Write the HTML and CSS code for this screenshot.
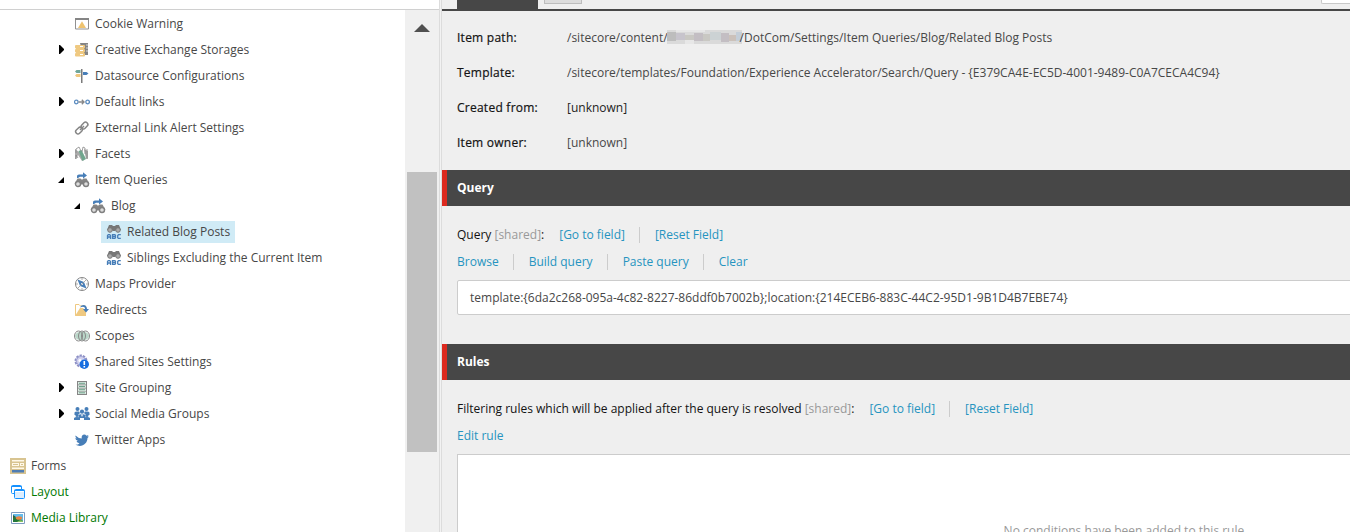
FILE: index.html
```html
<!DOCTYPE html>
<html lang="en">
<head>
<meta charset="utf-8">
<title>Content Editor</title>
<link rel="stylesheet" href="styles.css">
</head>
<body>
<div class="app">
  <aside class="sidebar">
    <div class="sidebar-top"></div>
    <div class="sidebar-body">
      <nav class="tree">
        <div class="row l1"><i class="arrow"></i><span class="node"><svg viewBox="0 0 16 16"><path d="M1.500 2.500h13v10.500h-13z" fill="#fff" stroke="#919191"/><path d="M1 2h14v2H1z" fill="#858585"/><path d="M8 5.200l4 6.800H4z" fill="#efc36f"/></svg>Cookie Warning</span></div>
        <div class="row l1"><i class="arrow closed"></i><span class="node"><svg viewBox="0 0 16 16"><path d="M6 1h8v12H9z" fill="#858585"/><path d="M12 3h2M12 6h2M12 9h2" stroke="#fff" stroke-width=".7"/><rect x="1" y="3" width="10" height="3.400" rx="1" fill="#efc981"/><rect x="1" y="7" width="10" height="3.400" rx="1" fill="#efc981"/><rect x="1" y="11" width="10" height="3.500" rx="1" fill="#efc981"/><path d="M2 6.500h8M2 10.500h8" stroke="#efc981"/><path d="M6 4.500h3M6 8.500h3M6 12.500h3" stroke="#fff"/></svg>Creative Exchange Storages</span></div>
        <div class="row l1"><i class="arrow"></i><span class="node"><svg viewBox="0 0 16 16"><path d="M7 1h1.500v14H7z" fill="#7b7b7b"/><path d="M6.500 2v3H2.500L1 3.500 2.500 2z" fill="#70a69a"/><path d="M9 4h3.500L14.500 5.500 12.500 7H9z" fill="#477eb8"/><path d="M6.500 6v3H2.500L1 7.500 2.500 6z" fill="#efc77d"/></svg>Datasource Configurations</span></div>
        <div class="row l1"><i class="arrow closed"></i><span class="node"><svg viewBox="0 0 16 16"><g fill="none" stroke-width="1.300"><circle cx="2.300" cy="8" r="1.800" stroke="#5b8cc0"/><circle cx="13.600" cy="8" r="1.800" stroke="#5b8cc0"/><path d="M4.500 8h6M7.800 5.800L10 8l-2.200 2.200" stroke="#888"/></g></svg>Default links</span></div>
        <div class="row l1"><i class="arrow"></i><span class="node"><svg viewBox="0 0 16 16"><g fill="none" stroke="#858585" stroke-width="1.500"><rect x="6.800" y="3.200" width="7.400" height="4.600" rx="2.200" transform="rotate(-45 10.500 5.500)"/><rect x="1.300" y="8.300" width="7.400" height="4.600" rx="2.200" transform="rotate(-45 5 10.600)"/><path d="M6 10l4-4"/></g></svg>External Link Alert Settings</span></div>
        <div class="row l1"><i class="arrow closed"></i><span class="node"><svg viewBox="0 0 16 16"><path d="M1 3l4 3 5 8-2 1-4-6-2 4H1zM10 3l4 2v8h-2z" fill="#aaa"/><path d="M4.500 5l3-1 4.500 9-3.500 2z" fill="#70a68e"/><path d="M2 7V3L5 1l2 4M8 6l1-5 2 1v6M13 3v9M2 13V9l2 3" fill="none" stroke="#888" stroke-width=".8"/></svg>Facets</span></div>
        <div class="row l1"><i class="arrow open"></i><span class="node"><svg viewBox="0 0 16 16"><use href="#query"/></svg>Item Queries</span></div>
        <div class="row l2"><i class="arrow open"></i><span class="node"><svg viewBox="0 0 16 16"><use href="#query"/></svg>Blog</span></div>
        <div class="row l3"><i class="arrow"></i><span class="node selected"><svg viewBox="0 0 16 16"><use href="#abc"/></svg>Related Blog Posts</span></div>
        <div class="row l3"><i class="arrow"></i><span class="node"><svg viewBox="0 0 16 16"><use href="#abc"/></svg>Siblings Excluding the Current Item</span></div>
        <div class="row l1"><i class="arrow"></i><span class="node"><svg viewBox="0 0 16 16"><circle cx="8" cy="8" r="6.500" fill="#fff" stroke="#858585"/><path d="M8 2v2M8 12v2M2 8h2M12 8h2" stroke="#aaa"/><path d="M3.500 3.500L10 6 12.500 12.500 6 10z" fill="#477eb8"/><circle cx="8" cy="8" r="1" fill="#fff"/><path d="M12 4L4 12" stroke="#999" stroke-width=".8"/></svg>Maps Provider</span></div>
        <div class="row l1"><i class="arrow"></i><span class="node"><svg viewBox="0 0 16 16"><path d="M1.500 13.500v-11H5L6.500 4h5v9.500z" fill="#fff" stroke="#efc981"/><path d="M1 14L6 6h3l3 3v5z" fill="#efc981"/><path d="M6 5.500C8 1.300 13 2.800 13 7H15l-3 3.500L9 7h2C11 4.500 9 4 6 5.500z" fill="#477eb8"/></svg>Redirects</span></div>
        <div class="row l1"><i class="arrow"></i><span class="node"><svg viewBox="0 0 16 16"><ellipse cx="8" cy="8" rx="7" ry="4.500" fill="#b9d6c8"/><g fill="none" stroke="#888"><ellipse cx="4.500" cy="8" rx="4" ry="5"/><ellipse cx="8" cy="8" rx="3.500" ry="5"/><ellipse cx="11.500" cy="8" rx="4" ry="5"/></g></svg>Scopes</span></div>
        <div class="row l1"><i class="arrow"></i><span class="node"><svg viewBox="0 0 16 16"><circle cx="7" cy="7" r="5.500" fill="#d8d8f2" stroke="#8b8ec4" stroke-width="2" stroke-dasharray="2.300 1.100"/><circle cx="7" cy="7" r="4.500" fill="#d2d3ef" stroke="#a4a6d4"/><circle cx="6" cy="6.500" r="1.500" fill="#fff"/><circle cx="10.300" cy="10.300" r="4.700" fill="#176ee0"/><path d="M10.300 7v4M10.300 12v1.500" stroke="#fff" stroke-width="1.600"/></svg>Shared Sites Settings</span></div>
        <div class="row l1"><i class="arrow closed"></i><span class="node"><svg viewBox="0 0 16 16"><path d="M3 1h10v14H3z" fill="#858585"/><path d="M4 2h8v2.500H4zM4 5.200h8v2.500H4zM4 8.400h8v2.500H4zM4 11.600h8V14H4z" fill="#d9e9e1"/><path d="M5 3.300h6M5 6.500h6M5 9.700h6M5 12.800h6" stroke="#70a08b"/></svg>Site Grouping</span></div>
        <div class="row l1"><i class="arrow closed"></i><span class="node"><svg viewBox="0 0 16 16"><g fill="#477eb8"><circle cx="3.500" cy="3" r="2"/><circle cx="12.500" cy="3" r="2"/><path d="M.5 9V6.500Q1 5.500 3 5.500h2L6 7 4 9zM15.500 9V6.500Q15 5.500 13 5.500h-2L10 7l2 2z"/><circle cx="8" cy="5.700" r="2.100"/><circle cx="3" cy="9.500" r="1.500"/><circle cx="13" cy="9.500" r="1.500"/><path d="M4.500 12V9.500Q5 8.200 7 8.200h2q2 0 2.500 1.300V12z"/><path d="M0 14v-2q1-1 3-1 2 0 3 1v2zM10 14v-2q1-1 3-1 2 0 3 1v2z"/></g><path d="M7 8.500L8 11l1-2.500" fill="#fff"/></svg>Social Media Groups</span></div>
        <div class="row l1"><i class="arrow"></i><span class="node"><svg viewBox="0 0 16 16"><path d="M1.500 3.500Q4.500 6.500 7.700 6.500C7 3 10.500 1.300 12.500 3.700L14.500 3l-1 1.700 1.500-.3-1.500 1.700C13.500 12 7.500 16 1.500 12.800q3 0 4-1.500Q3 11 2.500 9H4Q1.300 8 1.300 6l1.500.5Q.8 5 1.500 3.500z" fill="#477eb8"/></svg>Twitter Apps</span></div>
        <div class="row l0"><span class="node"><svg viewBox="0 0 16 16"><path d="M0 0h16v16H0z" fill="#d8c491"/><path d="M2 2h12v1.500H2zM2 5h7v3H2zM10 5h4v3h-4zM2 9.500h12V11H2z" fill="#fff8e8"/><path d="M3 6.500h5M11 6.500h2" stroke="#d8c491"/><path d="M2 12h12v2.500H2z" fill="#4f7db3"/></svg>Forms</span></div>
        <div class="row l0 green"><span class="node"><svg viewBox="0 0 16 16"><g fill="#fff" stroke="#1692ff"><rect x="1.500" y="1.500" width="10" height="8" rx="1"/><path d="M1.500 2.500h10"/><rect x="4.500" y="5.500" width="10" height="9" rx="1"/><path d="M4.500 6.500h10"/></g><path d="M5 8h9v6H5z" fill="#dceeff"/></svg>Layout</span></div>
        <div class="row l0 green"><span class="node"><svg viewBox="0 0 16 16"><path d="M1.500 2.500h13v11h-13z" fill="#fff" stroke="#7f9cc0"/><path d="M3 4h10v8H3z" fill="#65bceb"/><path d="M3 7q5 0 10 4v1H3z" fill="#247839"/><path d="M7 12q3-3 6-1v1z" fill="#8bc466"/><ellipse cx="9" cy="8" rx="3.200" ry="1.800" fill="#e98545"/><path d="M3 5l3 2-3 1z" fill="#365d30"/></svg>Media Library</span></div>
      </nav>
      <div class="scrollbar"><div class="scroll-up"></div><div class="thumb"></div></div>
    </div>
  </aside>
  <div class="splitter"></div>
  <main class="editor">
    <header class="tabs"><div class="tab-active"></div><div class="tab-button"></div><div class="search-box"></div></header>
    <dl class="info">
      <dt>Item path:</dt><dd>/sitecore/content/<svg class="redacted" viewBox="0 0 75 14"><path d="M0 0h75v14H0z" fill="#dadada"/><path d="M0 2h9v9H0z" fill="#bdbdbd"/><path d="M9 3h9v7H9z" fill="#c7c4cc"/><path d="M18 5h9v5h-9zM36 4h7v7h-7z" fill="#c9c8c3"/><path d="M27 3h9v8h-9zM54 3h8v9h-8z" fill="#c3bec3"/><path d="M43 2h11v8H43z" fill="#ccd2d4"/><path d="M62 5h7v6h-7z" fill="#cbc1ba"/><path d="M69 2h6v9h-6z" fill="#c4ced8"/><path d="M9 0h29v2H9zM18 10h9v4h-9z" fill="#e7e7e7"/></svg>/DotCom/Settings/Item Queries/Blog/Related Blog Posts</dd>
      <dt>Template:</dt><dd>/sitecore/templates/Foundation/Experience Accelerator/Search/Query - {E379CA4E-EC5D-4001-9489-C0A7CECA4C94}</dd>
      <dt>Created from:</dt><dd class="dark">[unknown]</dd>
      <dt>Item owner:</dt><dd>[unknown]</dd>
    </dl>
    <h2 class="section">Query</h2>
    <section class="field">
      <div class="links title"><span>Query <em>[shared]</em>:</span><a>[Go to field]</a><a>[Reset Field]</a></div>
      <div class="links"><a>Browse</a><a>Build query</a><a>Paste query</a><a>Clear</a></div>
      <div class="input"><span>template:{6da2c268-095a-4c82-8227-86ddf0b7002b};location:{214ECEB6-883C-44C2-95D1-9B1D4B7EBE74}</span></div>
    </section>
    <h2 class="section">Rules</h2>
    <section class="field">
      <div class="links title"><span>Filtering rules which will be applied after the query is resolved <em>[shared]</em>:</span><a>[Go to field]</a><a>[Reset Field]</a></div>
      <div class="links"><a>Edit rule</a></div>
      <div class="rules-box">No conditions have been added to this rule.</div>
    </section>
  </main>
</div>
<svg class="defs">
  <symbol id="query" viewBox="0 0 16 16"><path d="M3 6V4q0-1.500 2-1.500h4V.3L13 3.500 9 6.500V4.800H6L4 6z" fill="#477eb8"/><path d="M3.500 6.500h3l1 1h1l1-1h3L15.500 12H.5z" fill="#858585"/><g fill="#ddd" stroke="#808080" stroke-width="1.400"><circle cx="4" cy="12" r="2.500"/><circle cx="12" cy="12" r="2.500"/></g><path d="M6.500 9.500h3v3h-3z" fill="#808080"/></symbol>
  <symbol id="abc" viewBox="0 0 16 16"><path d="M3 1h3l1 1h2l1-1h3l2 5H1z" fill="#777"/><circle cx="4" cy="6" r="2.300" fill="#aaa" stroke="#777"/><circle cx="12" cy="6" r="2.300" fill="#aaa" stroke="#777"/><path d="M6.500 3h3v4h-3z" fill="#777"/><path d="M1.500 15v-3.500l.8-.8h1.400l.8.800V15M1.500 13h3M6.500 10.600v3.800h2.300l.7-.6v-.8l-.5-.5.5-.5v-.8l-.7-.6zM6.500 12.500h2.500M14.800 10.700H12.500l-.8.800V13.700l.8.700h2.300" fill="none" stroke="#477eb8" stroke-width="1.300"/></symbol>
</svg>
</body>
</html>
```
FILE: styles.css
```css
* { box-sizing: border-box; }
body { margin: 0; background: #efefef; font-family: "Open Sans", sans-serif; font-size: 12px; line-height: 16px; color: #474747; overflow: hidden; }
.app { display: flex; height: 532px; overflow: hidden; }
.sidebar { width: 439px; flex: none; display: flex; flex-direction: column; background: #fff; }
.sidebar-top { height: 10px; flex: none; border-bottom: 1px solid #d0d0d0; }
.sidebar-body { display: flex; flex: 1; min-height: 0; }
.tree { width: 405px; padding-top: 1px; }
.row { display: flex; align-items: center; height: 26px; }
.l0 { padding-left: 5px; }
.l1 { padding-left: 56px; }
.l2 { padding-left: 72px; }
.l3 { padding-left: 88px; }
.arrow { width: 13px; height: 10px; flex: none; padding-left: 3px; }
.arrow::before { content: ""; display: block; }
.closed::before { width: 5px; height: 9px; background: #000; clip-path: polygon(0 0, 20% 0, 100% 45%, 100% 55%, 20% 100%, 0 100%); }
.open::before { width: 6px; height: 6px; margin: 2px 0 0 -1px; background: #000; clip-path: polygon(100% 0, 100% 100%, 0 100%); }
.node { display: flex; align-items: center; height: 22px; padding: 0 5px; white-space: nowrap; }
.node svg { width: 16px; height: 16px; margin-right: 5px; flex: none; }
.selected { background: #d0ebf6; }
.green { color: #007800; }
.scrollbar { width: 34px; padding: 14px 2px 0; background: #f0f0f0; }
.scroll-up { width: 16px; height: 8px; margin: 0 auto 140px; background: #505050; clip-path: polygon(50% 0, 100% 100%, 0 100%); }
.thumb { height: 280px; background: #c1c1c1; }
.splitter { width: 3px; flex: none; background: #f2f2f2; border: solid #dcdcdc; border-width: 0 1px; }
.editor { flex: 1; min-width: 0; }
.tabs { display: flex; align-items: flex-start; height: 11px; border-bottom: 2px solid #474747; padding-left: 15px; }
.tab-active { width: 81px; height: 9px; background: #474747; }
.tab-button { width: 38px; height: 4px; margin-left: 6px; background: #ddd; border: 1px solid #bdbdbd; border-top: 0; }
.search-box { width: 29px; height: 4px; margin-left: auto; background: #fff; border: solid #c9c9c9; border-width: 0 0 1px 1px; border-radius: 0 0 0 2px; }
.info { display: grid; grid-template-columns: 110px 1fr; grid-auto-rows: 35px; height: 159px; margin: 0; padding: 9px 0 0 15px; align-items: center; white-space: nowrap; }
dt { color: #131313; letter-spacing: .25px; -webkit-text-stroke: .2px #131313; }
dd { margin: 0; }
.dark { color: #222; }
.redacted { width: 75px; height: 14px; margin: 0 -2px 0 -1px; vertical-align: -2px; }
.section { height: 36px; margin: 0; padding-left: 10px; border-left: 5px solid #dc291e; background: #474747; color: #fff; font-size: 12px; line-height: 36px; font-weight: 700; }
.field { padding: 15px 0 0 15px; height: 138px; }
.links { display: flex; align-items: center; height: 27px; color: #2694c0; white-space: nowrap; }
.links a + a { margin-left: 14px; padding-left: 15px; border-left: 1px solid #ccc; }
.title > span { color: #131313; margin-right: 15px; }
em { font-style: normal; color: #999; }
.input { width: 920px; height: 35px; margin-top: 5px; padding: 0 12px; border: 1px solid #ccc; border-radius: 2px; background: #fff; line-height: 33px; white-space: nowrap; }
.rules-box { width: 1337px; height: 200px; margin-top: 5px; padding: 68px 0 0; border: 1px solid #ccc; background: #fff; color: #999; text-align: center; }
.defs { display: none; }
```
